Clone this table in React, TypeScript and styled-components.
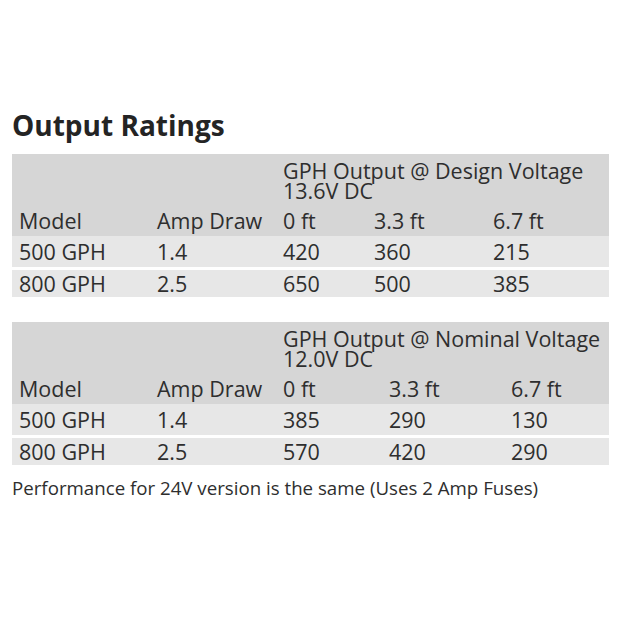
import React from "react";
import styled, { createGlobalStyle } from "styled-components";

const Global = createGlobalStyle`
  html, body { margin: 0; padding: 0; background: #fff; }
  body { font-family: "Open Sans", "Liberation Sans", sans-serif; color: #2e2e2e; }
`;

const Page = styled.div`
  width: 619px;
  height: 619px;
  box-sizing: border-box;
  padding: 108px 10px 0 12px;
  display: flex;
  flex-direction: column;
`;

const Title = styled.h2`
  margin: 0 0 12px 0;
  font-size: 28px;
  line-height: 34px;
  font-weight: 700;
  color: #242424;
`;

const Table = styled.table<{ $gapAfter: number }>`
  width: 597px;
  table-layout: fixed;
  border-collapse: collapse;
  font-size: 21.5px;
  line-height: 20px;
  margin-bottom: ${(p) => p.$gapAfter}px;
`;

const HeadCell = styled.th<{ $top?: boolean }>`
  background: #d6d6d6;
  font-weight: 400;
  text-align: left;
  vertical-align: bottom;
  white-space: nowrap;
  padding: ${(p) => (p.$top ? "7px 7px 5px" : "5px 7px 5px")};
`;

const Row = styled.tr<{ $sep?: boolean }>`
  background: #e7e7e7;
  border-top: ${(p) => (p.$sep ? "3px solid #fff" : "0")};
`;

const Cell = styled.td<{ $last?: boolean }>`
  padding: ${(p) => (p.$last ? "4px 7px 3px" : "6px 7px 5px")};
  white-space: nowrap;
`;

const Note = styled.p`
  margin: 0;
  font-size: 18.7px;
  line-height: 24px;
  color: #2e2e2e;
`;

type Spec = {
  label: string;
  voltage: string;
  widths: number[];
  rows: string[][];
  gapAfter: number;
};

const tables: Spec[] = [
  {
    label: "GPH Output @ Design Voltage",
    voltage: "13.6V DC",
    widths: [138, 126, 91, 119, 123],
    rows: [
      ["500 GPH", "1.4", "420", "360", "215"],
      ["800 GPH", "2.5", "650", "500", "385"],
    ],
    gapAfter: 25,
  },
  {
    label: "GPH Output @ Nominal Voltage",
    voltage: "12.0V DC",
    widths: [138, 126, 106, 122, 105],
    rows: [
      ["500 GPH", "1.4", "385", "290", "130"],
      ["800 GPH", "2.5", "570", "420", "290"],
    ],
    gapAfter: 11,
  },
];

const cols = ["Model", "Amp Draw", "0 ft", "3.3 ft", "6.7 ft"];

function RatingTable({ spec }: { spec: Spec }) {
  return (
    <Table $gapAfter={spec.gapAfter}>
      <colgroup>
        {spec.widths.map((w, i) => (
          <col key={i} style={{ width: w }} />
        ))}
      </colgroup>
      <thead>
        <tr>
          <HeadCell $top />
          <HeadCell $top />
          <HeadCell $top colSpan={3}>
            {spec.label}
            <br />
            {spec.voltage}
          </HeadCell>
        </tr>
        <tr>
          {cols.map((c) => (
            <HeadCell key={c}>{c}</HeadCell>
          ))}
        </tr>
      </thead>
      <tbody>
        {spec.rows.map((r, i) => {
          const last = i === spec.rows.length - 1;
          return (
            <Row key={i} $sep={i > 0}>
              {r.map((v, j) => (
                <Cell key={j} $last={last}>
                  {v}
                </Cell>
              ))}
            </Row>
          );
        })}
      </tbody>
    </Table>
  );
}

export default function App() {
  return (
    <>
      <Global />
      <Page>
        <Title>Output Ratings</Title>
        {tables.map((t, i) => (
          <RatingTable key={i} spec={t} />
        ))}
        <Note>Performance for 24V version is the same (Uses 2 Amp Fuses)</Note>
      </Page>
    </>
  );
}
